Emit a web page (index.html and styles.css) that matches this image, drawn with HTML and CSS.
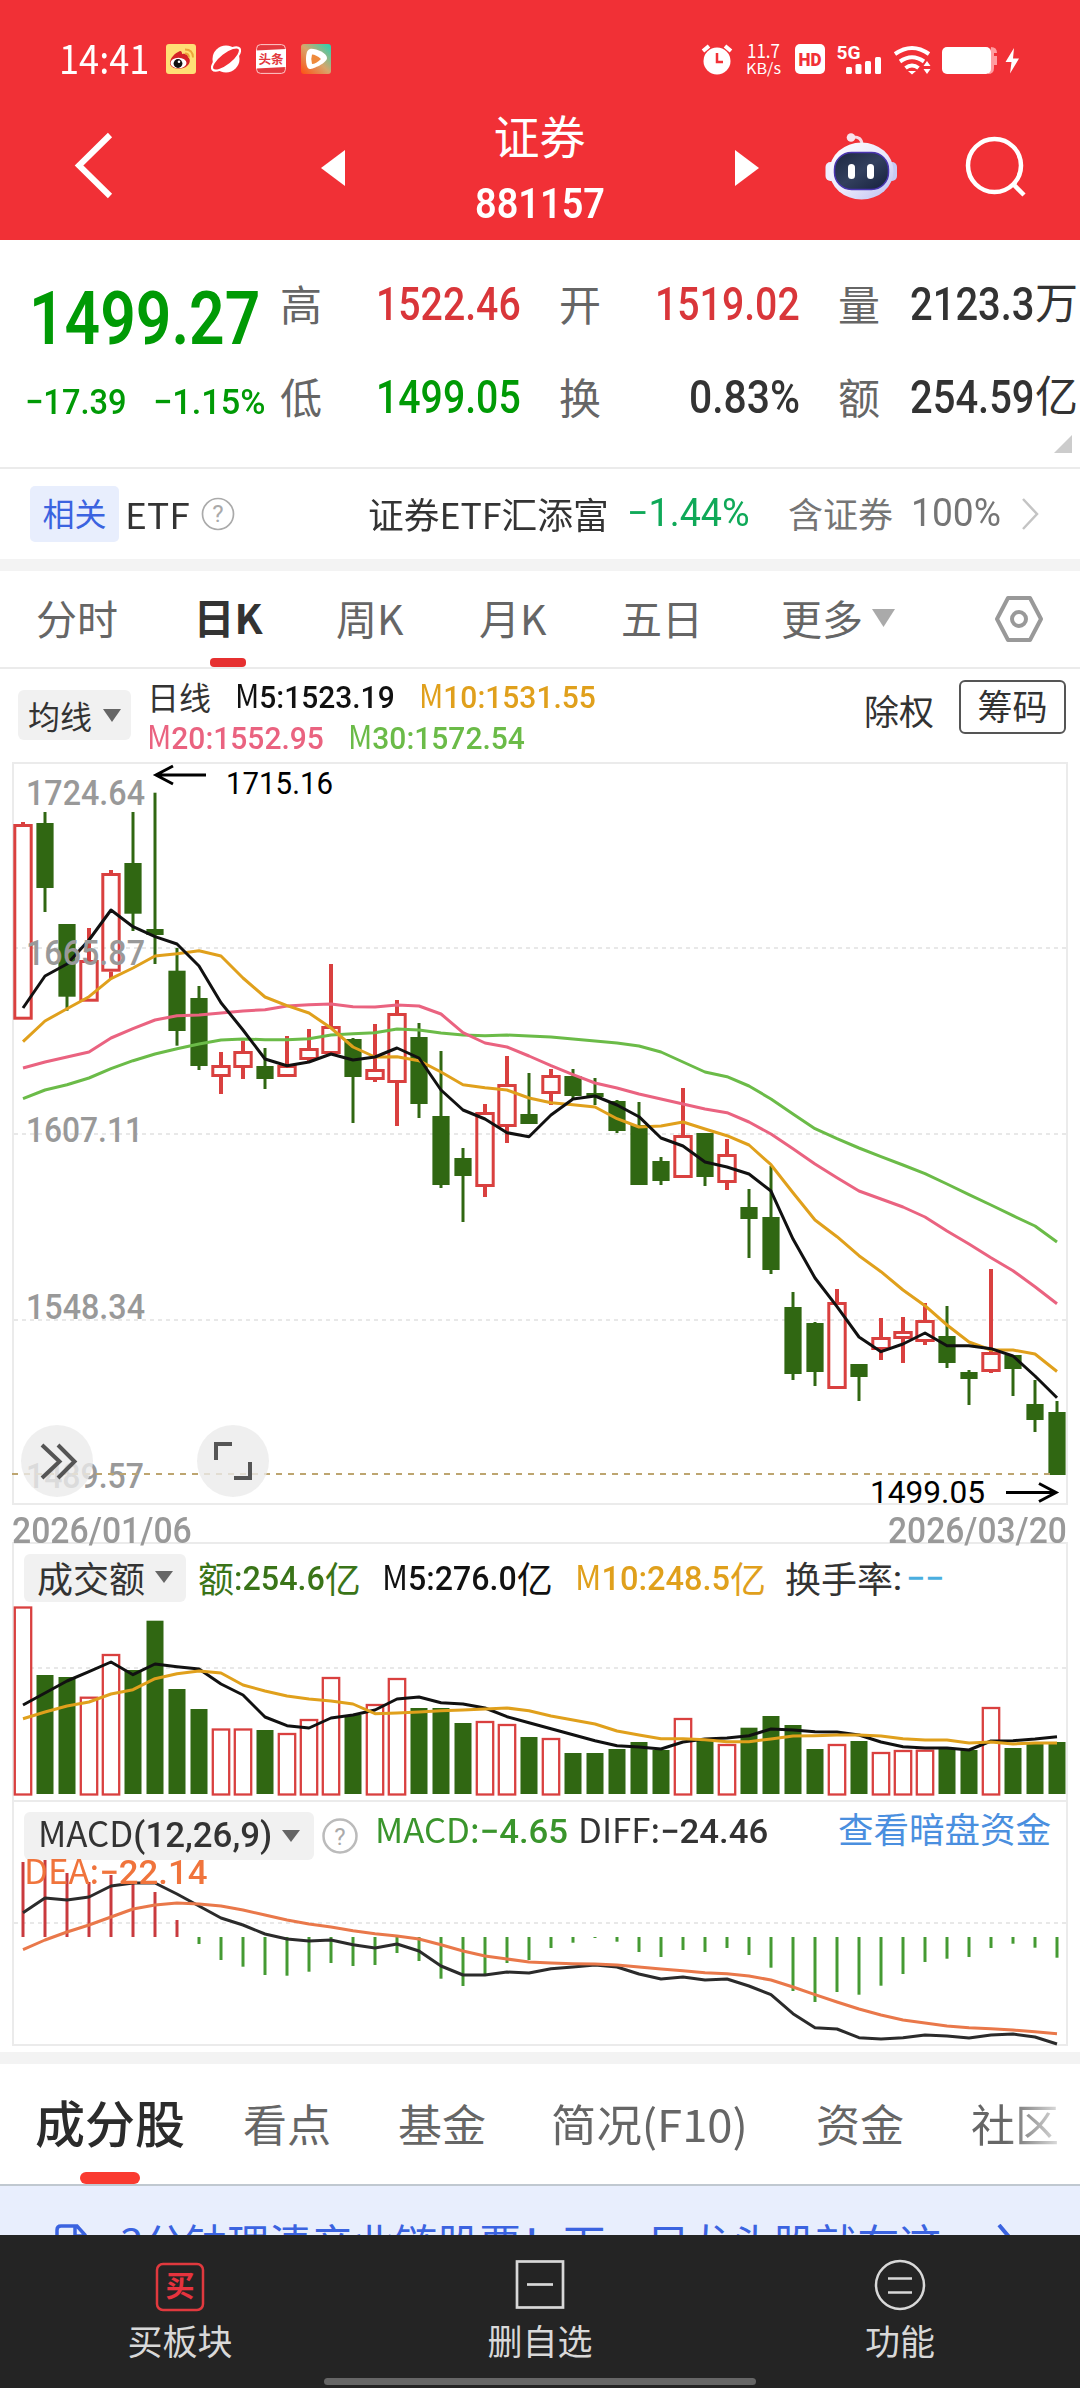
FILE: index.html
```html
<!DOCTYPE html>
<html lang="zh-CN">
<head>
<meta charset="utf-8">
<title>证券 881157</title>
<link rel="stylesheet" href="styles.css">
</head>
<body>
<div class="phone">
  <header class="top">
    <div class="status">
      <span class="clock" data-w="90">14:41</span>
      <div class="apps">
        <svg width="30" height="30" viewBox="0 0 30 30"><rect width="30" height="30" rx="3" fill="#ffdf76"/><path d="M4 19C4 14 9 9 14 7c2 0 2 2 2 3 3-1 6 0 6 3 3 2 2 7-1 9-4 4-17 4-17-3z" fill="#d52328"/><ellipse cx="12.500" cy="19" rx="8" ry="5.200" fill="#fff"/><circle cx="12" cy="19.500" r="4.400" fill="#111"/><circle cx="13" cy="17.800" r="1.300" fill="#fff"/><path d="M19 9.500q4 0 4 4M19 5.500q8 0 8 8" fill="none" stroke="#eda43a" stroke-width="1.800"/></svg>
        <svg width="30" height="30" viewBox="0 0 30 30"><circle cx="15" cy="15" r="13.500" fill="#fff"/><ellipse cx="15" cy="15" rx="17" ry="6.500" transform="rotate(-38 15 15)" fill="#f13036" stroke="#fff" stroke-width="2.200"/></svg>
        <svg width="30" height="30" viewBox="0 0 30 30"><rect x=".6" y=".6" width="28.800" height="28.800" rx="4" fill="#e2383e" stroke="#ffc9c9" stroke-width="1"/><path d="M0 6.500L30 5v18L0 24.500z" fill="#fff"/><text x="15" y="20" class="toutiao">头条</text></svg>
        <svg width="30" height="30" viewBox="0 0 30 30"><defs><linearGradient id="vid" x1="0" y1="1" x2="1" y2="0"><stop offset="0" stop-color="#ff4f12"/><stop offset=".5" stop-color="#d8a56c"/><stop offset="1" stop-color="#22d4b4"/></linearGradient></defs><rect width="30" height="30" rx="3" fill="url(#vid)"/><path d="M9 5c5-1 17 4 17 9S12 25 9 25 5 20 5 15 6 6 9 5z" fill="#fff"/><path d="M11 10.500q4 0 9 4.500-5 5-9 5-1.500-5 0-9.500z" fill="#ee8a3c"/></svg>
      </div>
      <svg class="sys" width="330" height="40" viewBox="700 39 330 40" fill="#fff">
        <circle cx="717" cy="61" r="13.500"/><path d="M703 51l6-5M731 51l-6-5" stroke="#fff" stroke-width="4"/><path d="M717 53v9h6" fill="none" stroke="#f13036" stroke-width="2.500"/>
        <text x="747" y="58" font-size="18.500" textLength="33" lengthAdjust="spacingAndGlyphs">11.7</text>
        <text x="746" y="74" font-size="15" textLength="35" lengthAdjust="spacingAndGlyphs">KB/s</text>
        <rect x="795" y="44" width="30" height="30" rx="5"/><text x="798.500" y="65.500" class="hd" textLength="23" lengthAdjust="spacingAndGlyphs">HD</text>
        <text x="836.500" y="59" class="fiveg" textLength="24" lengthAdjust="spacingAndGlyphs">5G</text>
        <rect x="846" y="67" width="6" height="7" rx="1.500"/><rect x="855.500" y="64" width="6" height="10" rx="1.500"/><rect x="865" y="61" width="6" height="13" rx="1.500"/><rect x="875" y="57" width="6" height="17" rx="1.500"/>
        <path d="M895 54q17-12 34 0M900 61.500q12-8.500 24 0M905.500 68q6.500-5 13 0" fill="none" stroke="#fff" stroke-width="4"/><path d="M908 71h8l-4 3.500zM923.500 66l3.500-5 3.500 5zM923.500 69l3.500 5 3.500-5z"/>
        <path d="M991 47q6 0 6 6h-3v15q0 6-6 6z" fill="#ff9da0"/><rect x="994" y="56" width="3" height="9" fill="#ff9da0"/><rect x="942" y="47" width="49" height="27" rx="5"/>
        <path d="M1014 48l-8.500 14h6l-1.500 11.500 9-15h-6z"/>
      </svg>
    </div>
    <nav class="titlebar">
      <svg width="50" height="80" viewBox="70 126 50 80"><path d="M110 135L79 165.500l31 30.500" fill="none" stroke="#fff" stroke-width="6"/></svg>
      <svg width="24" height="36" viewBox="0 0 24 36"><path d="M24 0v36L0 18z" fill="#fff"/></svg>
      <div class="title"><h1>证券</h1><strong data-w="130">881157</strong></div>
      <svg width="24" height="36" viewBox="0 0 24 36"><path d="M0 0v36l24-18z" fill="#fff"/></svg>
      <svg width="72" height="68" viewBox="825 131 72 68"><defs><linearGradient id="shell" x1="0" y1="0" x2="1" y2="1"><stop offset="0" stop-color="#fff"/><stop offset=".55" stop-color="#e9e8fb"/><stop offset="1" stop-color="#b9bdf0"/></linearGradient><linearGradient id="face" x1="0" y1="0" x2="1" y2="1"><stop offset="0" stop-color="#1c2740"/><stop offset=".5" stop-color="#33405e"/><stop offset="1" stop-color="#141f3c"/></linearGradient></defs><path d="M852 136q10-1 10 8" fill="none" stroke="#f6d9e4" stroke-width="3"/><circle cx="851" cy="136.500" r="4.300" fill="#f8e4ec"/><rect x="825.500" y="161" width="12" height="19" rx="5" fill="#eeeefe"/><rect x="885" y="161" width="12" height="19" rx="5" fill="#c6caf4"/><ellipse cx="861.500" cy="170" rx="32" ry="28.500" fill="url(#shell)"/><rect x="834.500" y="151.500" width="54" height="37" rx="17" fill="url(#face)" stroke="#4a35b0" stroke-width="1.500"/><rect x="848" y="163" width="7" height="15" rx="3.500" fill="#fff"/><rect x="867" y="163" width="7" height="15" rx="3.500" fill="#fff"/></svg>
      <svg width="64" height="66" viewBox="964 134 64 66"><circle cx="994.500" cy="166.500" r="26.500" fill="none" stroke="#fff" stroke-width="4.500"/><path d="M1013 185l11 11" stroke="#fff" stroke-width="4.500"/></svg>
    </nav>
  </header>

  <section class="quote">
    <div class="last">
      <b class="price" data-w="231">1499.27</b>
      <div class="change"><span data-w="102">−17.39</span><span data-w="113">−1.15%</span></div>
    </div>
    <dl class="stats">
      <dt>高</dt><dd class="up"><span data-w="145">1522.46</span></dd>
      <dt>开</dt><dd class="up"><span data-w="145">1519.02</span></dd>
      <dt>量</dt><dd><span data-w="125">2123.3</span><i>万</i></dd>
      <dt>低</dt><dd class="down"><span data-w="145">1499.05</span></dd>
      <dt>换</dt><dd><span data-w="111">0.83%</span></dd>
      <dt>额</dt><dd><span data-w="125">254.59</span><i>亿</i></dd>
    </dl>
    <svg class="expand" width="18" height="18" viewBox="0 0 18 18"><path d="M18 0v18H0z" fill="#ccc"/></svg>
  </section>

  <section class="related">
    <span class="badge">相关</span>
    <span class="etf"><span data-w="65">ETF</span></span>
    <svg width="34" height="34" viewBox="0 0 34 34"><circle cx="17" cy="17" r="15.500" fill="none" stroke="#aaa" stroke-width="1.700"/><text x="17" y="25" class="qmark">?</text></svg>
    <span class="fund" data-w="241">证券ETF汇添富</span>
    <span class="rate"><span data-w="123">−1.44%</span></span>
    <span class="hold">含证券</span>
    <span class="hold num"><span data-w="90">100%</span></span>
    <svg width="20" height="34" viewBox="0 0 20 34"><path d="M2 2l14 15L2 32" fill="none" stroke="#c4c4c4" stroke-width="2.500"/></svg>
  </section>

  <nav class="periods">
    <a>分时</a><a class="on">日K</a><a>周K</a><a>月K</a><a>五日</a><a>更多<svg width="23" height="18" viewBox="0 0 23 18"><path d="M0 0h23L11.500 18z" fill="#aaa"/></svg></a>
    <svg class="gear" width="50" height="50" viewBox="0 0 50 50" fill="none" stroke="#999" stroke-width="4"><path d="M14 4h22l11 21-11 21H14L3 25z" stroke-linejoin="round"/><circle cx="25" cy="25" r="7"/></svg>
  </nav>

  <section class="ma">
    <button class="pick">均线<svg width="18" height="13" viewBox="0 0 18 13"><path d="M0 0h18L9 13z"/></svg></button>
    <div class="lines">
      <div><i>日线</i><span class="m5" data-w="160"><span class="t">M</span>5:1523.19</span><span class="m10" data-w="177"><span class="t">M</span>10:1531.55</span></div>
      <div><span class="m20" data-w="177"><span class="t">M</span>20:1552.95</span><span class="m30" data-w="177"><span class="t">M</span>30:1572.54</span></div>
    </div>
    <span class="chuquan">除权</span>
    <button class="chips">筹码</button>
  </section>

  <svg id="kline" class="chart" width="1080" height="743" viewBox="0 762 1080 743"></svg>
  <div class="dates"><span data-w="180">2026/01/06</span><span data-w="179">2026/03/20</span></div>

  <section class="panel volume">
    <svg id="volume" class="chart" width="1080" height="259" viewBox="0 1542 1080 259"></svg>
    <div class="legend">
      <button class="pick">成交额<svg width="18" height="12" viewBox="0 0 18 12"><path d="M0 0h18L9 12z"/></svg></button>
      <span class="amt"><i>额</i><span data-w="91">:254.6</span><i>亿</i></span>
      <span class="m5"><span data-w="135"><span class="t">M</span>5:276.0</span><i>亿</i></span>
      <span class="m10"><span data-w="155"><span class="t">M</span>10:248.5</span><i>亿</i></span>
      <span class="turn"><i>换手率</i>:<em>−−</em></span>
    </div>
  </section>

  <section class="panel macd">
    <svg id="macd" class="chart" width="1080" height="251" viewBox="0 1801 1080 251"></svg>
    <div class="legend">
      <button class="pick"><span data-w="234"><span class="t">MACD</span>(12,26,9)</span><svg width="18" height="12" viewBox="0 0 18 12"><path d="M0 0h18L9 12z"/></svg></button>
      <svg width="36" height="36" viewBox="0 0 36 36"><circle cx="18" cy="18" r="16.500" fill="none" stroke="#bbb" stroke-width="2.500"/><text x="18" y="27" class="qmark">?</text></svg>
      <span class="bar" data-w="193"><span class="t">MACD:</span>−4.65</span>
      <span class="diff" data-w="190"><span class="t">DIFF:</span>−24.46</span>
      <a class="dark">查看暗盘资金</a>
      <span class="dea"><span data-w="183"><span class="t">DEA:</span>−22.14</span></span>
    </div>
  </section>

  <nav class="tabs">
    <a class="on">成分股</a><a>看点</a><a>基金</a><a><span data-w="197">简况(F10)</span></a><a>资金</a><a class="fade">社区</a>
  </nav>
  <div class="promo">
    <svg width="34" height="40" viewBox="0 0 34 40" fill="none" stroke="#3b63e0" stroke-width="3.500"><path d="M2 40V6q0-4 4-4h16l8 9v29M20 2v10h10"/></svg>
    <span>3分钟理清产业链股票！下一只龙头股就在这</span>
    <svg width="16" height="30" viewBox="0 0 16 30"><path d="M2 1l11 13L2 28" fill="none" stroke="#3b63e0" stroke-width="4"/></svg>
  </div>

  <footer class="actions">
    <a><svg width="52" height="56" viewBox="0 0 52 56"><rect x="3" y="6" width="46" height="46" rx="6" fill="none" stroke="#e0393e" stroke-width="2.500"/><text x="26" y="38.500" class="buy">买</text></svg>买板块</a>
    <a><svg width="52" height="56" viewBox="0 0 52 56" fill="none" stroke="#d8d8d8" stroke-width="2.700"><rect x="3" y="3.500" width="46" height="46"/><path d="M13 26.500h26"/></svg>删自选</a>
    <a><svg width="52" height="56" viewBox="0 0 52 56" fill="none" stroke="#d8d8d8" stroke-width="2.500"><circle cx="26" cy="27" r="24"/><path d="M14 20.500h24M14 34.500h24"/></svg>功能</a>
    <div class="home"></div>
  </footer>
</div>
<script src="charts.js"></script>
</body>
</html>
```
FILE: styles.css
```css
* { box-sizing: border-box; margin: 0; padding: 0; }
body { width: 1080px; background: #fff; color: #333; font-family: Roboto, "Noto Sans CJK SC", sans-serif; }
.phone { width: 1080px; height: 2388px; overflow: hidden; }
svg { display: block; flex: none; }
i, em { font-style: normal; }
span, a, i, b, strong, h1 { white-space: nowrap; }
button { border: 0; background: none; font: inherit; color: inherit; }
[data-w] { display: inline-block; transform-origin: 0 50%; justify-self: start; }
.t { font-weight: 400; font-family: "Noto Sans CJK SC", sans-serif; line-height: 1; }

.top { height: 240px; background: #f13036; color: #fff; }
.status { height: 100px; padding: 0 50px 0 59px; display: flex; align-items: center; padding-top: 18px; }
.clock { font: 400 39px/46px "Noto Sans CJK SC", sans-serif; margin-top: -5px; }
.apps { display: flex; gap: 15px; margin-left: 17px; }
.sys { margin-left: auto; font-family: "Noto Sans CJK SC", sans-serif; }
.toutiao { font: 700 12.500px "Noto Sans CJK SC", sans-serif; fill: #e2383e; text-anchor: middle; }
.hd { font: 900 18px Roboto, sans-serif; fill: #f13036; }
.fiveg { font: 700 19px Roboto, sans-serif; }
.titlebar { height: 140px; display: grid; grid-template-columns: 251px 24px 390px 90px 139px 1fr; padding-left: 70px; align-items: center; padding-bottom: 8px; }
.titlebar > svg:nth-of-type(2), .titlebar > svg:nth-of-type(3) { margin-top: 4px; }
.title { display: flex; flex-direction: column; align-items: center; }
.title h1 { font: 400 46px/56px "Noto Sans CJK SC", sans-serif; margin-top: 3px; margin-left: -1px; }
.title strong { font: 600 42px/50px Roboto, sans-serif; margin-top: 17px; }

.quote { height: 229px; border-bottom: 2px solid #ebebeb; display: grid; grid-template-columns: 280px 800px; position: relative; }
.last { padding-left: 29px; color: #009a05; }
.price { font: 600 75px/90px Roboto, sans-serif; margin-top: 33px; }
.change { display: flex; gap: 26px; margin-left: -4px; margin-top: 17px; font: 500 35.500px/44px Roboto, sans-serif; }
.stats { display: grid; grid-template-columns: 42px 199px 38px 42px 199px 38px 42px 198px; grid-template-rows: 93px 93px; padding-top: 17px; align-items: center; height: 203px; }
.stats dt { font-size: 42px; color: #666; grid-column: auto; margin-top: -2px; }
.stats dt:nth-of-type(3n+1) { grid-column: 1; }
.stats dt:nth-of-type(3n+2) { grid-column: 4; }
.stats dt:nth-of-type(3n) { grid-column: 7; }
.stats dd { font: 500 46px/60px Roboto, "Noto Sans CJK SC", sans-serif; display: flex; justify-content: flex-end; }
.stats dd i { font-size: 43px; font-weight: 400; }
.stats .up { color: #d9363a; }
.stats .down { color: #009a05; }
.expand { position: absolute; right: 8px; bottom: 14px; }

.related { height: 90px; padding-left: 30px; display: grid; grid-template-columns: 97px 74px 167px 260px 160px 126px 107px 1fr; align-items: center; font-size: 36px; }
.badge { width: 89px; height: 56px; border-radius: 5px; background: #e8eefd; color: #3b63e0; font-size: 32px; line-height: 58px; text-align: center; }
.etf, .fund, .hold { font-family: "Noto Sans CJK SC", sans-serif; line-height: 50px; margin-top: -2px; }
.etf { margin-left: -2px; }
.qmark { font: 400 24px Roboto, sans-serif; fill: #aaa; text-anchor: middle; }
.rate { color: #0fa958; font-size: 38px; margin-top: -3px; margin-left: -1px; }
.hold { color: #757575; font-size: 35px; }
.num { font: 400 38px/50px Roboto, sans-serif; margin: -3px 0 0 -3px; }

.periods { height: 110px; border-top: 12px solid #f3f3f3; border-bottom: 2px solid #ebebeb; padding-left: 36px; display: grid; grid-template-columns: 160px 140px 143px 142px 160px 213px 1fr; align-items: center; font: 400 41px/94px "Noto Sans CJK SC", sans-serif; color: #666; }
.periods a { display: flex; align-items: center; gap: 9px; height: 96px; line-height: 91px; padding-bottom: 3px; }
.periods .on { color: #333; font-weight: 700; width: 66px; flex-direction: column; gap: 0; line-height: 90px; height: 96px; padding: 0; margin-left: -1px; }
.periods .on::after { content: ""; width: 36px; height: 9px; border-radius: 4px; background: #e63030; margin-top: -3px; }
.gear { margin-left: 0; }

.ma { height: 93px; padding-left: 18px; display: grid; grid-template-columns: 129px 717px 95px 107px; align-items: start; }
.pick { display: flex; align-items: center; justify-content: center; background: #f1f1f1; border-radius: 6px; fill: #666; color: #333; }
.ma .pick { width: 113px; height: 50px; gap: 11px; font-size: 32px; margin-top: 21px; }
.lines { font: 500 32px/41px Roboto, sans-serif; padding-top: 8px; }
.lines div { display: flex; align-items: center; height: 41px; }
.lines i { font: 400 32px/41px "Noto Sans CJK SC", sans-serif; width: 88px; margin-top: -2px; }
.lines [data-w] + [data-w] { margin-left: 24px; }
.m5 { color: #111; } .m10 { color: #e0a01c; } .m20 { color: #ea6380; } .m30 { color: #6bbb48; }
.chuquan { font-size: 35px; line-height: 50px; margin-top: 20px; }
.chips { width: 107px; height: 54px; margin-top: 11px; border: 2px solid #555; border-radius: 6px; font-size: 35px; line-height: 50px; padding-top: 2px; }

.dates { height: 37px; padding: 7px 13px 0 12px; display: flex; justify-content: space-between; font: 500 36px/38px Roboto, sans-serif; color: #999; }
.panel { display: grid; }
.panel > * { grid-area: 1 / 1; }
.legend { display: grid; align-content: start; align-items: center; font: 500 34px/48px Roboto, "Noto Sans CJK SC", sans-serif; padding-left: 24px; }
.legend i { font: 400 36px/48px "Noto Sans CJK SC", sans-serif; margin-top: -2px; }
.legend > span { display: inline-flex; align-items: center; }
.volume .legend { grid-template-columns: 174px 184px 193px 210px 1fr; padding-top: 12px; }
.volume .pick { width: 162px; height: 48px; gap: 10px; font: 400 36px/44px "Noto Sans CJK SC", sans-serif; padding-bottom: 2px; }
.amt { color: #3a7418; }
.turn em { color: #4aaee0; margin-left: 4px; }
.macd .legend { grid-template-columns: 298px 53px 203px 260px 1fr; padding-top: 11px; }
.macd .pick { width: 290px; height: 48px; gap: 10px; font: 500 35px/48px Roboto, sans-serif; }
.macd .legend > .bar, .macd .legend > .diff { display: inline-block; margin-top: -10px; }
.bar { color: #3a952c; }
.dark { color: #4a8fdf; font: 400 35.500px/48px "Noto Sans CJK SC", sans-serif; margin-top: -16px; }
.legend .dea { grid-column: 1; color: #f0743c; line-height: 36px; margin: -7px 0 0 0; }
.candle-up { fill: none; stroke: #d9403f; stroke-width: 3; }
.candle-down { fill: #306712; }
.wick-up { stroke: #d9403f; stroke-width: 4; }
.wick-down { stroke: #306712; stroke-width: 3; }
.vol-up { fill: #fff; stroke: #d9403f; stroke-width: 2.300; }
.frame { fill: none; stroke: #ebebeb; stroke-width: 2; }
.guide { stroke: #e8e8e8; stroke-width: 2; stroke-dasharray: 4 4; }
.now { stroke: #bda570; stroke-width: 2; stroke-dasharray: 6 6; }
.curve { fill: none; stroke-width: 3; stroke-linejoin: round; }
.axis { font: 500 35px Roboto, sans-serif; fill: #999; }
.mark { font: 400 31px Roboto, sans-serif; fill: #000; }
.arrow { fill: none; stroke: #000; stroke-width: 3; }
.disc { fill: #ebebeb; fill-opacity: .8; }
.glyph { fill: none; stroke: #555; stroke-width: 4; }

.tabs { border-top: 12px solid #f3f3f3; border-bottom: 2px solid #c0c8d0; padding-left: 34px; display: grid; grid-template-columns: 209px 155px 153px 265px 155px 1fr; font: 400 44px/124px "Noto Sans CJK SC", sans-serif; color: #666; height: 134px; }
.tabs a { height: 120px; line-height: 119px; }
.tabs .on { color: #2b2b2b; font-size: 50px; font-weight: 500; width: 152px; display: flex; flex-direction: column; align-items: center; line-height: 115px; }
.tabs .on::after { content: ""; width: 60px; height: 12px; border-radius: 6px; background: #fa3a30; margin-top: -7px; }
.fade { width: 88px; background: linear-gradient(90deg, #666 40%, #ddd); -webkit-background-clip: text; background-clip: text; color: transparent; }
.promo { height: 49px; overflow: hidden; background: #e8eefd; color: #3b63e0; display: grid; grid-template-columns: 65px 877px 1fr; padding: 38px 0 0 55px; font: 400 42px/50px "Noto Sans CJK SC", sans-serif; }
.promo span { margin-top: -7px; }
.actions { height: 153px; background: #242424; color: #d8d8d8; display: grid; grid-template-columns: repeat(3, 360px); font: 400 35px/46px "Noto Sans CJK SC", sans-serif; justify-items: center; align-content: start; }
.actions a { height: 143px; padding-top: 23px; display: flex; flex-direction: column; align-items: center; gap: 3px; }
.buy { font: 700 29px "Noto Sans CJK SC", sans-serif; fill: #e6333e; text-anchor: middle; }
.home { grid-column: 1 / 4; width: 432px; height: 7px; border-radius: 4px; background: #666; }
```
FILE: charts.js
```js
// One entry per trading day: direction, body top, body bottom, high, low.
const candles = `R 824 1019.7 822 1019.7|G 823 888 812 912|G 924 996.7 924 1010.7|R 960 1001.7 928 1001.7|R 873 971.7 870 979|G 863 913.7 812 931|G 929 935 792.7 964|G 970.7 1031 948 1045.7|G 998 1066 986 1070|R 1065 1077 1052 1094|R 1051 1068 1040.7 1079|G 1066 1079 1048 1089|R 1065 1077 1036 1077|R 1048 1060 1029 1062|R 1026 1054 964 1054|G 1039 1077 1038 1123|R 1069 1080 1024 1082|R 1013 1083 1000 1126|G 1037 1104 1023 1118|G 1116 1185 1051 1188|G 1158 1176 1148 1222|R 1112 1187 1104 1197|R 1084 1127 1056 1143|G 1114 1124 1073 1124|R 1075 1094 1069 1105|G 1076 1096 1069 1100|G 1093 1097 1078 1105|G 1101 1131 1100 1133|G 1125 1185 1102 1185|G 1161 1181 1157 1185|R 1135 1178 1088 1178|G 1133 1177 1133 1186|R 1154 1183 1139 1190|G 1207 1219 1189 1258|G 1217 1270 1166 1274|G 1307 1374 1292 1380|G 1323 1372 1322 1386|R 1302 1389 1289 1389|G 1364 1377 1364 1401|R 1337 1350 1318 1360|R 1331 1339 1317 1363|R 1320 1342 1303 1345|G 1336 1363 1306 1368|G 1372 1379 1370 1405|R 1352 1372 1269 1373|G 1355 1369 1355 1396|G 1404 1420 1380 1432|G 1412 1475 1401 1475`
  .split('|').map(r => { const [d, ...n] = r.split(' '); return [d, ...n.map(Number)]; });
const ma5 = [1008,976,964,940,910,926.7,936.7,944,966,1002.7,1030,1059,1065.7,1062,1054,1060,1057,1048,1058,1090,1110,1119,1132.7,1136.7,1115,1099,1096,1105,1116.7,1138,1146,1162,1167,1174,1191,1239,1278,1306.7,1337,1351.7,1344,1333,1345.7,1345.7,1348.7,1356,1376,1397.7];
const ma10 = [1041.7,1021,1008.7,996.7,978.7,968,956,953.7,950.7,956,978,997,1005.7,1013,1028,1047,1057,1056.7,1060.7,1072,1084.7,1087.7,1090,1098,1102.7,1104.7,1107,1118.7,1127,1126,1122,1129,1135.7,1145,1164.7,1192.7,1220,1236.7,1255.7,1271.7,1290,1305.7,1325,1342,1350,1350,1354,1371.5];
const ma20 = [1068,1062,1057,1052,1038,1028.7,1020,1015.7,1015,1013,1011,1009.7,1006,1004.7,1004,1006.7,1007,1005,1006,1014,1032.7,1043,1047,1056,1065.7,1074.7,1083,1088,1094,1099,1104,1109,1112.7,1122,1134,1148.7,1164,1177.7,1191,1199,1207,1217,1231,1244,1257.7,1270.7,1286.7,1303.7];
const ma30 = [1098.7,1090,1084.7,1078,1068.7,1060.7,1054,1048.7,1044,1040,1039,1039.7,1039.7,1038.7,1035,1033.7,1032.7,1029,1030,1033,1035,1035.7,1035,1036,1037,1039,1041,1043,1046,1052,1062,1072,1076.7,1086,1099,1114,1128.7,1138.7,1148,1156.7,1165,1173.7,1184,1194.7,1205,1215.7,1226,1242];
const vol = [1606.5,1675,1677,1696.7,1654,1670,1620.7,1689,1709,1728.5,1728.5,1730,1733,1719,1677,1715,1704,1678,1708,1708,1723,1721,1724,1737,1738,1753,1753,1749,1742,1750,1718,1741,1744,1727.7,1716,1725,1749,1744,1741,1752,1750,1749.7,1748.7,1750,1707,1748,1743,1742];
const vol5 = [1705,1693,1681,1671.7,1662,1674.7,1664,1666.7,1669,1684,1695,1717,1725.7,1728,1718,1715,1710,1699,1697,1702.7,1704,1708,1716.7,1722.7,1728.7,1734.7,1740.7,1745.7,1747,1749,1742,1739,1738,1735.7,1729,1730,1731.7,1732,1735,1742,1746.7,1748,1748,1750,1741,1740.7,1739,1736.7];
const vol10 = [1718.7,1712,1706,1702,1694,1689.7,1678.7,1673.7,1671,1673,1685,1691,1696,1699,1701,1704,1713.7,1713,1712,1710.7,1710,1709,1708,1710.7,1716,1720,1724,1731,1735,1738.7,1738.7,1739.7,1741.7,1741.7,1739,1736,1735.7,1735,1735,1736,1738.7,1740,1740,1743,1742,1744,1743,1743];
const bars = [1862,1854,1873,1882,1875,1884,1892,1920,1944,1960,1966.7,1975,1975.7,1971.7,1963,1966,1965,1953,1961,1978.7,1986,1975.7,1963,1960,1948,1942.7,1938,1941.7,1952,1957,1950,1952,1948,1955,1967.7,1991,2002,1992,1994.7,1985.7,1974,1962,1958.7,1957,1948,1943.7,1947.7,1957.7];
const diff = [1912.7,1898,1900,1897,1886,1883,1883,1894,1906,1918,1925,1934,1939,1941,1940,1944.7,1948,1944,1951,1966,1975,1975,1972,1973,1968.7,1967,1965,1967,1974,1979,1977,1980,1979,1986,1994.7,2013.7,2027.7,2029,2037.7,2039,2037.7,2035,2036,2038,2035,2034,2037,2044];
const dea = [1949.7,1940,1932,1925,1917,1909,1905,1903,1904,1906,1910,1915,1920,1924,1927,1930.7,1933.7,1936,1939,1944.7,1951,1956,1959,1962,1963,1963.7,1964,1965,1967,1969,1970.7,1972.7,1973.7,1976,1980,1987,1994.7,2002,2009,2015,2020,2023,2026,2027.7,2028.7,2030,2031.7,2033.7];

const x = i => 23 + 22 * i;
const line = (x1, y1, x2, y2, cls) => `<line x1="${x1}" y1="${y1}" x2="${x2}" y2="${y2}" class="${cls}"/>`;
const rect = (l, t, w, h, cls) => `<rect x="${l}" y="${t}" width="${w}" height="${h}" class="${cls}"/>`;
const curve = (ys, color) => `<polyline class="curve" stroke="${color}" points="${ys.map((y, i) => x(i) + ',' + y).join(' ')}"/>`;
const label = (s, l, y, w, cls) => `<text x="${l}" y="${y}" class="${cls}" textLength="${w}" lengthAdjust="spacingAndGlyphs">${s}</text>`;
const guide = y => line(14, y, 1066, y, 'guide');

let k = rect(13, 763, 1054, 741, 'frame') + guide(948) + guide(1134) + guide(1320);
candles.forEach(([d, t, b, h, l], i) => {
  const c = x(i);
  if (d === 'R') {
    if (h < t) k += line(c, h, c, t, 'wick-up');
    if (l > b) k += line(c, b, c, l, 'wick-up');
    k += rect(c - 8.2, t + 1.5, 16.4, b - t - 3, 'candle-up');
  } else {
    k += line(c, h, c, l, 'wick-down') + rect(c - 8.6, t, 17.2, b - t, 'candle-down');
  }
});
k += curve(ma30, '#6bbb48') + curve(ma20, '#ea6380') + curve(ma10, '#e0a01c') + curve(ma5, '#111');
k += label('1724.64', 26, 805, 119, 'axis') + label('1665.87', 26, 965, 119, 'axis') + label('1607.11', 26, 1142, 117, 'axis')
   + label('1548.34', 26, 1319, 119, 'axis') + label('1489.57', 26, 1488, 118, 'axis');
k += line(12, 1474, 1050, 1474, 'now');
k += '<path class="arrow" d="M206 775H156M173 766l-17 9 17 9M1006 1492.600h50M1039 1483.500l17 9-17 9"/>';
k += label('1715.16', 226, 794, 107, 'mark') + label('1499.05', 870, 1503, 115, 'mark');
k += '<circle class="disc" cx="57" cy="1461" r="36"/><circle class="disc" cx="233" cy="1461" r="36"/>';
k += '<path class="glyph" d="M42 1445l17.500 16.500L42 1478M58 1445l16.500 16.500L58 1478M216 1460v-16h16M250 1462v16h-16"/>';
document.getElementById('kline').innerHTML = k;

let v = rect(13, 1543, 1054, 258, 'frame') + guide(1668);
vol.forEach((t, i) => {
  v += candles[i][0] === 'R' ? rect(x(i) - 8.2, t + 1, 16.4, 1793.5 - t, 'vol-up') : rect(x(i) - 8.5, t, 17, 1794 - t, 'candle-down');
});
v += curve(vol5, '#111') + curve(vol10, '#e0a01c');
document.getElementById('volume').innerHTML = v;

let m = rect(13, 1801, 1054, 244, 'frame') + guide(1923);
bars.forEach((y, i) => {
  m += `<line x1="${x(i)}" y1="1937" x2="${x(i)}" y2="${y}" stroke="${y < 1937 ? '#c93a3e' : '#459a33'}" stroke-width="3"/>`;
});
m += curve(diff, '#2b2b2b') + curve(dea, '#e9784a');
document.getElementById('macd').innerHTML = m;

// Condense text with a data-w attribute to that width.
document.querySelectorAll('[data-w]').forEach(el => {
  const natural = el.offsetWidth, w = +el.dataset.w;
  el.style.transform = `scaleX(${w / natural})`;
  el.style.marginRight = `${w - natural}px`;
});
```
